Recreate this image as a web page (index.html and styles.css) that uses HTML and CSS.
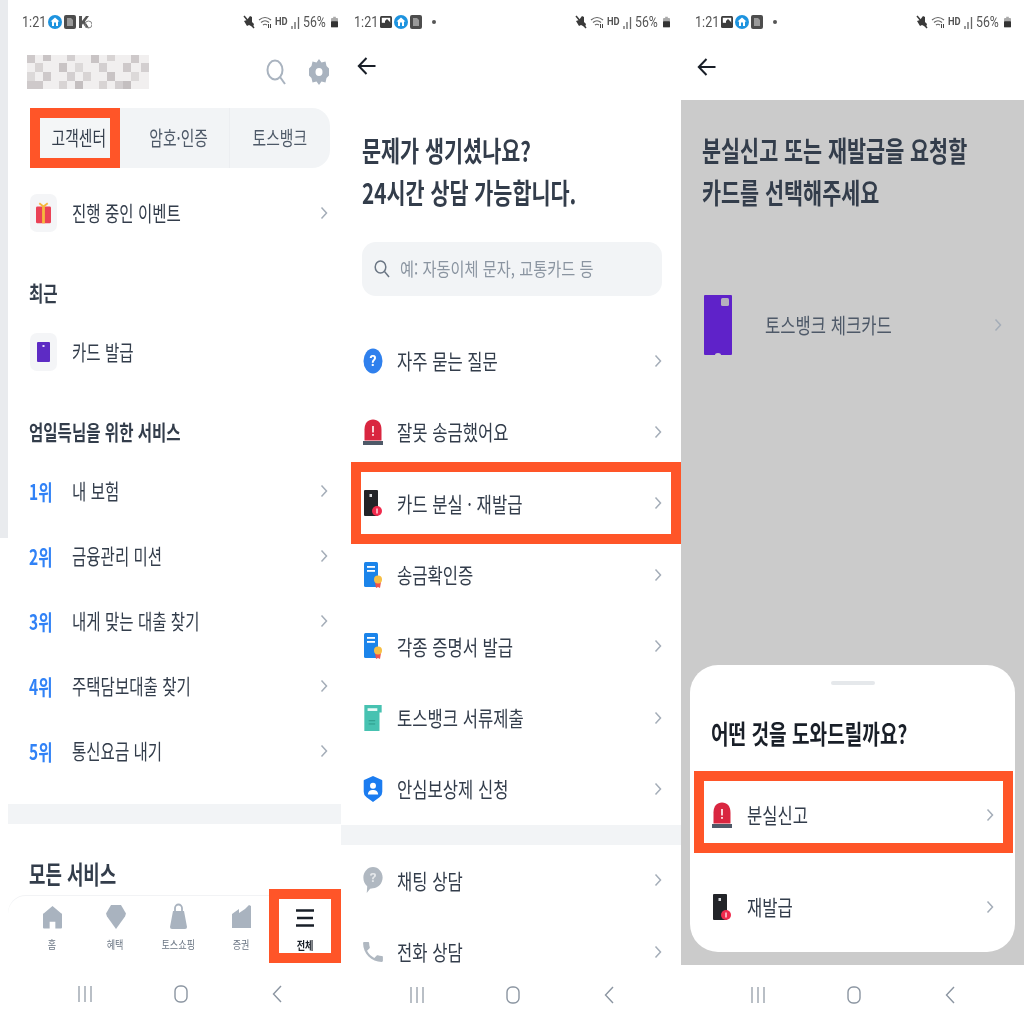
FILE: index.html
```html
<!DOCTYPE html>
<html lang="ko">
<head>
<meta charset="utf-8">
<title>토스 고객센터</title>
<link rel="stylesheet" href="styles.css">
</head>
<body>
<svg class="defs" aria-hidden="true">
  <defs>
    <symbol id="chev" viewBox="0 0 8 14"><path d="M1.500 1.500 6.500 7 1.500 12.500" fill="none" stroke="#a4adb8" stroke-width="1.500"/></symbol>
    <symbol id="back" viewBox="0 0 20 20"><path d="M18.500 10H2M9.500 2 1.800 10l7.700 8" fill="none" stroke="#191f28" stroke-width="2"/></symbol>
    <symbol id="gift" viewBox="0 0 16 22"><rect y="4" width="16" height="18" rx="1.500" fill="#ea4256"/><rect x="6.500" y="4" width="3" height="18" fill="#f6b73c"/><path d="M8 4 3.500 .5M8 4l4.500-3.500" stroke="#f6b73c" stroke-width="2" fill="none"/></symbol>
    <symbol id="card-mini" viewBox="0 0 13 20"><rect width="13" height="20" rx="1" fill="#5d2bc4"/><rect x="5.500" y="3" width="2" height="2" fill="#e4dcf6"/></symbol>
    <symbol id="siren" viewBox="0 0 20 26"><path d="M1.500 21.500V10.500C1.500 4 5 .5 10 .5s8.500 3.500 8.500 10v11z" fill="#d92640"/><rect y="22" width="20" height="4" fill="#4e5968"/><rect x="9.200" y="7" width="1.600" height="6.500" fill="#fff"/><rect x="9.200" y="15" width="1.600" height="1.800" fill="#fff"/></symbol>
    <symbol id="card-lost" viewBox="0 0 18 26"><rect width="14" height="26" rx="1" fill="#222428"/><rect x="5.500" y="4" width="2.500" height="3" fill="#d8dadd"/><circle cx="13" cy="21" r="5" fill="#f02a4c"/><rect x="12.400" y="18.500" width="1.200" height="5" fill="#fff"/></symbol>
    <symbol id="doc" viewBox="0 0 18 26"><rect width="14" height="25" rx="1.500" fill="#1b84ea"/><rect x="3" y="4" width="8" height="1.800" fill="#fff"/><rect x="3" y="8" width="8" height="1.800" fill="#fff"/><path d="M11 20l1 6 2-1 2 1 1-6z" fill="#f0524f"/><circle cx="14" cy="17.500" r="4" fill="#f6bf45"/></symbol>
    <symbol id="doc-teal" viewBox="0 0 16 24"><path d="M0 0h16v7h-2v17H0z" fill="#47c2b1"/><rect x="3" y="3" width="9" height="2.500" fill="#eafaf7"/><rect x="4" y="14" width="6" height="1" fill="#2f9c8d"/><rect x="4" y="17" width="6" height="1" fill="#2f9c8d"/></symbol>
    <symbol id="shield" viewBox="0 0 20 28"><path d="M10 0 19 4a1 1 0 0 1 1 1v12q0 4-3 6l-7 5-7-5q-3-2-3-6V5a1 1 0 0 1 1-1z" fill="#1b7cf0"/><circle cx="10" cy="10.500" r="3.200" fill="#fff"/><path d="M4.500 20c0-3.500 2.500-5 5.500-5s5.500 1.500 5.500 5z" fill="#fff"/></symbol>
    <symbol id="chat" viewBox="0 0 20 27"><path d="M10 0c5.500 0 10 5 10 11s-4.500 11-10 11q-2 0-3 .5L3.500 27 4 20C1.500 18 0 15 0 11 0 5 4.500 0 10 0z" fill="#b0b8c1"/><text x="10" y="16" text-anchor="middle" font-size="14" font-weight="700" fill="#e5e8eb" font-family="Roboto">?</text></symbol>
    <symbol id="phone" viewBox="2 2 20 20"><path d="M6.600 10.800c1.400 2.800 3.800 5.100 6.600 6.600l2.200-2.200c.3-.3.700-.4 1-.2 1.100.4 2.300.6 3.600.6.600 0 1 .4 1 1V20c0 .600-.4 1-1 1C10.600 21 3 13.400 3 4c0-.6.400-1 1-1h3.500c.6 0 1 .4 1 1 0 1.300.2 2.500.6 3.600.1.300 0 .7-.2 1z" fill="#b0b8c1"/></symbol>
    <symbol id="home" viewBox="0 0 20 24"><path d="M10 .500 19 8a1 1 0 0 1 1 1v14a1 1 0 0 1-1 1h-6v-7H7v7H1a1 1 0 0 1-1-1V9a1 1 0 0 1 1-1z" fill="#a9b3bf"/></symbol>
    <symbol id="gem" viewBox="0 0 20 24"><path d="M5 0h10l5 8.500-1 3L10 24 1 11.500l-1-3z" fill="#a9b3bf"/></symbol>
    <symbol id="bag" viewBox="0 0 17 26"><path d="M5 9V5a3.500 3.500 0 0 1 7 0v4" fill="none" stroke="#a9b3bf" stroke-width="1.800"/><path d="M3 8h11l3 16a2 2 0 0 1-2 2H2a2 2 0 0 1-2-2z" fill="#a9b3bf"/></symbol>
    <symbol id="stock" viewBox="0 0 19 23"><path d="M0 9 7 4v4l6-4 4-4 2 1v22H0z" fill="#a9b3bf"/></symbol>
    <symbol id="s-blue" viewBox="0 0 14 14"><circle cx="7" cy="7" r="7" fill="#1d93df"/><path d="M7 2.500 11.500 6.500H10V11H4V6.500H2.500z" fill="#fff"/><rect x="6" y="7.500" width="2" height="3.500" fill="#1d93df"/></symbol>
    <symbol id="s-dark" viewBox="0 0 12 14"><rect width="12" height="14" rx="2" fill="#4d4d4d"/><path d="M3 3h4l2 2v6H3z" fill="#9a9a9a"/></symbol>
    <symbol id="s-pic" viewBox="0 0 12 12"><rect width="12" height="12" rx="1.500" fill="#3c3c3c"/><rect x="1.800" y="1.800" width="8.400" height="5" fill="#fff"/><path d="M5 5l2-2 3 3v1H5z" fill="#3c3c3c"/></symbol>
    <symbol id="s-k" viewBox="0 0 14 14"><path d="M1 1h3v5l4-5h3L7 6.500 11 13H8L5 8.500 4 10v3H1z" fill="#555"/><circle cx="10.500" cy="9.500" r="3.500" fill="none" stroke="#888"/></symbol>
    <symbol id="s-mute" viewBox="0 0 12 14"><path d="M1 6l3-1 3-4 2 1v5l2 2-1 3-4-2-2 1z" fill="#3a3a3a"/><path d="M1 1l10 12" stroke="#3a3a3a" stroke-width="1.500"/></symbol>
    <symbol id="s-wifi" viewBox="0 0 14 14"><path d="M1 5q6-5 12 0M3 7.500q4-3.500 8 0M5 10q2-1.500 4 0" fill="none" stroke="#666" stroke-width="1.200"/><path d="M10.500 9v4M12.500 9v4" stroke="#444"/></symbol>
    <symbol id="s-signal" viewBox="0 0 9 13"><path d="M1 13v-3M4 13V6M7.500 13V1" stroke="#666" stroke-width="1.300"/></symbol>
    <symbol id="s-batt" viewBox="0 0 8 12"><rect x="2.500" width="3" height="2" fill="#aaa"/><rect y="1.500" width="8" height="10.500" rx="1" fill="#aaa"/><rect y="5" width="8" height="7" rx="1" fill="#333"/></symbol>
  </defs>
</svg>

<main class="screen">
  <section class="panel panel-one">
    <div class="status">
      <span class="time">1:21</span>
      <svg class="si si-14"><use href="#s-blue"/></svg>
      <svg class="si si-12"><use href="#s-dark"/></svg>
      <svg class="si si-14"><use href="#s-k"/></svg>
      <div class="status-right">
        <svg class="si si-12"><use href="#s-mute"/></svg>
        <svg class="si si-14"><use href="#s-wifi"/></svg>
        <span class="hd">HD</span>
        <svg class="si si-9"><use href="#s-signal"/></svg>
        <span class="pct">56%</span>
        <svg class="si si-8"><use href="#s-batt"/></svg>
      </div>
    </div>
    <header class="main-head">
      <svg class="mosaic" viewBox="0 0 122 34" role="img" aria-label="가려진 이름">
        <rect width="122" height="34" fill="#f1efef"/>
        <g fill="#bfb9ba">
          <rect y="0" width="8" height="8" opacity=".7"/><rect x="16" width="8" height="6" opacity=".8"/><rect x="40" width="8" height="6" opacity=".6"/><rect x="64" width="8" height="8" opacity=".8"/><rect x="80" width="8" height="6" opacity=".5"/><rect x="104" width="8" height="8" opacity=".7"/>
          <rect x="8" y="8" width="8" height="9" opacity=".5"/><rect x="32" y="8" width="8" height="9" opacity=".8"/><rect x="48" y="8" width="8" height="9" opacity=".4"/><rect x="72" y="8" width="8" height="9" opacity=".6"/><rect x="96" y="8" width="8" height="9" opacity=".7"/><rect x="114" y="8" width="8" height="9" opacity=".6"/>
          <rect y="17" width="8" height="9" opacity=".4"/><rect x="16" y="17" width="8" height="9" opacity=".7"/><rect x="40" y="17" width="8" height="9" opacity=".6"/><rect x="56" y="17" width="8" height="9" opacity=".5"/><rect x="80" y="17" width="8" height="9" opacity=".8"/><rect x="104" y="17" width="8" height="9" opacity=".4"/>
          <rect y="26" width="16" height="8" opacity=".7"/><rect x="32" y="26" width="8" height="8" opacity=".5"/><rect x="48" y="26" width="8" height="8" opacity=".9"/><rect x="72" y="26" width="8" height="8" opacity=".5"/><rect x="88" y="26" width="8" height="8" opacity=".6"/><rect x="96" y="26" width="8" height="8" opacity=".9"/>
        </g>
      </svg>
      <svg class="head-search" viewBox="0 0 20 26"><ellipse cx="9" cy="11" rx="7.500" ry="9.500" fill="none" stroke="#a9b3bf" stroke-width="2"/><path d="M14 18l5 7" stroke="#a9b3bf" stroke-width="2"/></svg>
      <svg class="head-gear" viewBox="0 0 20 26"><path d="M10 0l2.500 3.500 4-1 1 4.500 2.500 2.500v7L17.500 19l-1 4.500-4-1L10 26l-2.500-3.500-4 1-1-4.500L0 16.500v-7L2.500 7l1-4.500 4 1z" fill="#a9b3bf"/><ellipse cx="10" cy="13" rx="3.500" ry="4" fill="#fff"/></svg>
    </header>
    <nav class="tabs">
      <div class="tab tab-on"><span class="tx tx-c">고객센터</span></div>
      <div class="tab tab-mid"><span class="tx tx-c">암호·인증</span></div>
      <div class="tab tab-line"><span class="tx tx-c">토스뱅크</span></div>
    </nav>
    <div class="row row-tile row-event">
      <span class="tile"><svg class="tile-gift"><use href="#gift"/></svg></span>
      <span class="tx">진행 중인 이벤트</span>
      <svg class="chev"><use href="#chev"/></svg>
    </div>
    <h2 class="sub sub-recent"><span class="tx">최근</span></h2>
    <div class="row row-tile row-recent">
      <span class="tile"><svg class="tile-card"><use href="#card-mini"/></svg></span>
      <span class="tx">카드 발급</span>
    </div>
    <h2 class="sub sub-for"><span class="tx">엄일득님을 위한 서비스</span></h2>
    <ol class="ranks">
      <li class="row row-rank"><b class="rank"><span class="tx">1위</span></b><span class="tx">내 보험</span><svg class="chev"><use href="#chev"/></svg></li>
      <li class="row row-rank"><b class="rank"><span class="tx">2위</span></b><span class="tx">금융관리 미션</span><svg class="chev"><use href="#chev"/></svg></li>
      <li class="row row-rank"><b class="rank"><span class="tx">3위</span></b><span class="tx">내게 맞는 대출 찾기</span><svg class="chev"><use href="#chev"/></svg></li>
      <li class="row row-rank"><b class="rank"><span class="tx">4위</span></b><span class="tx">주택담보대출 찾기</span><svg class="chev"><use href="#chev"/></svg></li>
      <li class="row row-rank"><b class="rank"><span class="tx">5위</span></b><span class="tx">통신요금 내기</span><svg class="chev"><use href="#chev"/></svg></li>
    </ol>
    <div class="gap-band band-one"></div>
    <h2 class="sub sub-all"><span class="tx">모든 서비스</span></h2>
    <nav class="tabbar">
      <div class="tb"><svg class="tb-icon tb-home"><use href="#home"/></svg><span class="tx tx-c">홈</span></div>
      <div class="tb"><svg class="tb-icon tb-gem"><use href="#gem"/></svg><span class="tx tx-c">혜택</span></div>
      <div class="tb"><svg class="tb-icon tb-bag"><use href="#bag"/></svg><span class="tx tx-c">토스쇼핑</span></div>
      <div class="tb"><svg class="tb-icon tb-stock"><use href="#stock"/></svg><span class="tx tx-c">증권</span></div>
      <div class="tb tb-on">
        <svg class="tb-menu" viewBox="0 0 18 18"><path d="M0 1.500h18M1 9h16M0 16.500h18" stroke="#191f28" stroke-width="2.400"/></svg>
        <span class="tx tx-c">전체</span>
      </div>
    </nav>
    <div class="sysnav sysnav-one">
      <svg class="sys-lines" viewBox="0 0 14 16"><path d="M1 0v16M7 0v16M13 0v16" stroke="#8b95a1" stroke-width="1.200"/></svg>
      <svg class="sys-home" viewBox="0 0 14 18"><rect x="1" y="1" width="12" height="16" rx="5" fill="none" stroke="#8b95a1" stroke-width="1.400"/></svg>
      <svg class="sys-back" viewBox="0 0 10 18"><path d="M9 1 1.500 9 9 17" fill="none" stroke="#8b95a1" stroke-width="1.400"/></svg>
    </div>
  </section>

  <section class="panel panel-two">
    <div class="status">
      <span class="time">1:21</span>
      <svg class="si si-12"><use href="#s-pic"/></svg>
      <svg class="si si-14"><use href="#s-blue"/></svg>
      <svg class="si si-12"><use href="#s-dark"/></svg>
      <i class="dot"></i>
      <div class="status-right">
        <svg class="si si-12"><use href="#s-mute"/></svg>
        <svg class="si si-14"><use href="#s-wifi"/></svg>
        <span class="hd">HD</span>
        <svg class="si si-9"><use href="#s-signal"/></svg>
        <span class="pct">56%</span>
        <svg class="si si-8"><use href="#s-batt"/></svg>
      </div>
    </div>
    <header class="back-head"><svg class="back"><use href="#back"/></svg></header>
    <div class="scroll">
      <h1 class="title"><span class="tx">문제가 생기셨나요?</span><br><span class="tx">24시간 상담 가능합니다.</span></h1>
      <div class="search">
        <svg class="search-ico" viewBox="0 0 16 18"><ellipse cx="6.500" cy="7" rx="5.300" ry="6" fill="none" stroke="#6b7684" stroke-width="1.500"/><path d="M10.500 11.500 15 17" stroke="#6b7684" stroke-width="1.500"/></svg>
        <span class="tx">예: 자동이체 문자, 교통카드 등</span>
      </div>
      <ul class="menu">
        <li class="row row-menu"><svg class="mi" viewBox="0 0 20 26"><ellipse cx="10" cy="13" rx="9.500" ry="12.500" fill="#2f80ed"/><text x="10" y="18" text-anchor="middle" font-size="14" font-weight="700" fill="#fff" font-family="Roboto">?</text></svg><span class="tx">자주 묻는 질문</span><svg class="chev"><use href="#chev"/></svg></li>
        <li class="row row-menu"><svg class="mi"><use href="#siren"/></svg><span class="tx">잘못 송금했어요</span><svg class="chev"><use href="#chev"/></svg></li>
        <li class="row row-menu row-hl"><svg class="mi"><use href="#card-lost"/></svg><span class="tx">카드 분실 · 재발급</span><svg class="chev"><use href="#chev"/></svg></li>
        <li class="row row-menu"><svg class="mi"><use href="#doc"/></svg><span class="tx">송금확인증</span><svg class="chev"><use href="#chev"/></svg></li>
        <li class="row row-menu"><svg class="mi"><use href="#doc"/></svg><span class="tx">각종 증명서 발급</span><svg class="chev"><use href="#chev"/></svg></li>
        <li class="row row-menu"><svg class="mi"><use href="#doc-teal"/></svg><span class="tx">토스뱅크 서류제출</span><svg class="chev"><use href="#chev"/></svg></li>
        <li class="row row-menu"><svg class="mi"><use href="#shield"/></svg><span class="tx">안심보상제 신청</span><svg class="chev"><use href="#chev"/></svg></li>
      </ul>
      <div class="gap-band"></div>
      <ul class="menu">
        <li class="row row-menu"><svg class="mi"><use href="#chat"/></svg><span class="tx">채팅 상담</span><svg class="chev"><use href="#chev"/></svg></li>
        <li class="row row-menu"><svg class="mi"><use href="#phone"/></svg><span class="tx">전화 상담</span><svg class="chev"><use href="#chev"/></svg></li>
      </ul>
    </div>
    <div class="sysnav">
      <svg class="sys-lines" viewBox="0 0 14 16"><path d="M1 0v16M7 0v16M13 0v16" stroke="#8b95a1" stroke-width="1.200"/></svg>
      <svg class="sys-home" viewBox="0 0 14 18"><rect x="1" y="1" width="12" height="16" rx="5" fill="none" stroke="#8b95a1" stroke-width="1.400"/></svg>
      <svg class="sys-back" viewBox="0 0 10 18"><path d="M9 1 1.500 9 9 17" fill="none" stroke="#8b95a1" stroke-width="1.400"/></svg>
    </div>
  </section>

  <section class="panel panel-three">
    <div class="status">
      <span class="time">1:21</span>
      <svg class="si si-12"><use href="#s-pic"/></svg>
      <svg class="si si-14"><use href="#s-blue"/></svg>
      <svg class="si si-12"><use href="#s-dark"/></svg>
      <i class="dot"></i>
      <div class="status-right">
        <svg class="si si-12"><use href="#s-mute"/></svg>
        <svg class="si si-14"><use href="#s-wifi"/></svg>
        <span class="hd">HD</span>
        <svg class="si si-9"><use href="#s-signal"/></svg>
        <span class="pct">56%</span>
        <svg class="si si-8"><use href="#s-batt"/></svg>
      </div>
    </div>
    <header class="back-head back-head-tall"><svg class="back"><use href="#back"/></svg></header>
    <div class="dim">
      <h1 class="title title-dim"><span class="tx">분실신고 또는 재발급을 요청할</span><br><span class="tx">카드를 선택해주세요</span></h1>
      <div class="row card-row">
        <svg class="bigcard" viewBox="0 0 28 60"><path d="M1 0h26a1 1 0 0 1 1 1v58a1 1 0 0 1-1 1H17a3 2 0 0 0-6 0H1a1 1 0 0 1-1-1V1a1 1 0 0 1 1-1z" fill="#5f22c9"/><rect x="17" y="3" width="8" height="8" rx="1.500" fill="#b5b0bd"/></svg>
        <span class="tx">토스뱅크 체크카드</span>
        <svg class="chev"><use href="#chev"/></svg>
      </div>
      <aside class="sheet">
        <div class="handle"></div>
        <h2 class="sheet-title"><span class="tx">어떤 것을 도와드릴까요?</span></h2>
        <div class="row sheet-row sheet-row-hl"><svg class="mi"><use href="#siren"/></svg><span class="tx">분실신고</span><svg class="chev"><use href="#chev"/></svg></div>
        <div class="row sheet-row sheet-row-next"><svg class="mi"><use href="#card-lost"/></svg><span class="tx">재발급</span><svg class="chev"><use href="#chev"/></svg></div>
      </aside>
    </div>
    <div class="sysnav">
      <svg class="sys-lines" viewBox="0 0 14 16"><path d="M1 0v16M7 0v16M13 0v16" stroke="#8b95a1" stroke-width="1.200"/></svg>
      <svg class="sys-home" viewBox="0 0 14 18"><rect x="1" y="1" width="12" height="16" rx="5" fill="none" stroke="#8b95a1" stroke-width="1.400"/></svg>
      <svg class="sys-back" viewBox="0 0 10 18"><path d="M9 1 1.500 9 9 17" fill="none" stroke="#8b95a1" stroke-width="1.400"/></svg>
    </div>
  </section>
</main>
</body>
</html>
```

FILE: styles.css
```css
* { box-sizing: border-box; }
html, body { margin: 0; padding: 0; background: #fff; }
body { width: 1024px; height: 1024px; overflow: hidden; font-family: "Noto Sans CJK KR", "Noto Sans", sans-serif; color: #333d4b; }
h1, h2, ol, ul { margin: 0; padding: 0; list-style: none; font-weight: inherit; font-size: inherit; }
svg { display: block; flex: none; }
.defs { position: absolute; width: 0; height: 0; }

.screen { display: grid; grid-template-columns: 341px 340px 343px; height: 1024px; filter: blur(.45px); }
.panel { position: relative; display: flex; flex-direction: column; height: 1024px; overflow: hidden; background: #fff; }
.panel-one { padding-left: 8px; }
.panel-one::before { content: ""; position: absolute; left: 0; top: 0; width: 8px; height: 538px; background: #e9ebee; }

/* squeezed text: the source picture is narrowed horizontally */
.tx { display: inline-block; white-space: nowrap; transform: scaleX(var(--squeeze, .79)); transform-origin: left center; line-height: 1.2; }
.tx-c { transform-origin: center center; }

/* status bar */
.status { height: 44px; display: flex; align-items: center; gap: 2px; padding: 0 3px 0 14px; color: #555; flex: none; }
.panel-two .status { padding: 0 11px 0 13px; }
.panel-three .status { padding: 0 13px 0 14px; }
.time { font: 14px Roboto, sans-serif; margin-right: 2px; color: #555; transform: scaleX(.9); transform-origin: left; width: 22px; }
.status-right { margin-left: auto; display: flex; align-items: center; gap: 3px; }
.si { height: 14px; }
.si-14 { width: 14px; }
.si-12 { width: 12px; }
.si-9 { width: 9px; height: 13px; }
.si-8 { width: 7px; height: 12px; }
.hd { font: 700 11px/10px Roboto, sans-serif; color: #555; width: 13px; transform: scaleX(.85); transform-origin: left; }
.pct { font: 15px Roboto, sans-serif; color: #555; width: 25px; transform: scaleX(.82); transform-origin: left; white-space: nowrap; }
.dot { width: 4px; height: 4px; border-radius: 50%; background: #555; margin-left: 8px; }

/* panel 1 header + tabs */
.main-head { height: 56px; display: flex; align-items: center; padding: 0 12px 0 19px; flex: none; }
.mosaic { width: 122px; height: 34px; }
.head-search { width: 20px; height: 26px; margin-left: auto; }
.head-gear { width: 20px; height: 26px; margin-left: 23px; }

.tabs { margin: 8px 0 0 22px; width: 300px; height: 60px; background: #f2f4f6; border-radius: 0 18px 18px 0; display: grid; grid-template-columns: 90px 109px 101px; flex: none; font-size: 20px; color: #4e5968; --squeeze: .74; }
.tab { display: flex; align-items: center; justify-content: center; }
.tab-on { border: 10px solid #ff5528; background: #f4f6f7; color: #333d4b; padding-left: 7px; }
.tab-mid { padding-left: 8px; }
.tab-line { box-shadow: inset 1px 0 0 #eceef1; }

/* rows */
.row { display: flex; align-items: center; font-size: 21px; --squeeze: .74; }
.chev { width: 8px; height: 14px; margin-left: auto; }
.row-tile { height: 50px; padding: 0 13px 0 22px; gap: 15px; flex: none; }
.row-event { margin-top: 20px; }
.row-recent { margin-top: 19px; }
.tile { width: 27px; height: 38px; border-radius: 7px; background: #f4f5f7; display: flex; align-items: center; justify-content: center; }
.tile-gift { width: 15px; height: 22px; }
.tile-card { width: 13px; height: 20px; }

.sub { height: 30px; padding-left: 21px; display: flex; align-items: center; font-size: 21px; font-weight: 700; flex: none; --squeeze: .74; }
.sub-recent { margin-top: 40px; }
.sub-for { margin-top: 40px; }
.sub-all { margin-top: 34px; font-size: 25px; --squeeze: .715; }

.ranks { margin-top: 11px; flex: none; }
.row-rank { height: 65px; padding: 0 13px 0 21px; }
.rank { width: 43px; color: #3182f6; font-weight: 700; }

.gap-band { height: 20px; background: #f2f4f6; flex: none; }
.band-one { margin-top: 21px; }

/* bottom tabs */
.tabbar { margin-top: 7px; height: 68px; display: flex; padding-left: 13px; border-radius: 18px 18px 0 0; box-shadow: inset 0 1px 0 #f2f3f5; flex: none; --squeeze: .83; }
.tb { width: 63px; padding-top: 10px; display: flex; flex-direction: column; align-items: center; justify-content: flex-start; font-size: 11px; color: #6b7684; }
.tb .tx { margin-top: auto; margin-bottom: 12px; }
.tb-icon { height: 24px; }
.tb-home { width: 19px; }
.tb-gem { width: 20px; }
.tb-bag { width: 17px; height: 26px; margin-top: -2px; }
.tb-stock { width: 19px; height: 23px; }
.tb-on { width: 72px; height: 74px; margin: -6px 0 0 -4px; padding-top: 10px; border: 10px solid #ff5528; color: #191f28; font-weight: 700; background: #fff; }
.tb-on .tx { margin-bottom: 1px; }
.tb-menu { width: 18px; height: 18px; }

/* system navigation */
.sysnav { height: 59px; display: flex; align-items: center; flex: none; padding-left: 69px; position: relative; }
.sysnav-one { height: 61px; padding-left: 70px; }
.panel-three .sysnav { padding-left: 70px; }
.sys-lines { width: 14px; height: 16px; }
.sys-home { width: 14px; height: 18px; margin-left: 82px; }
.sys-back { width: 10px; height: 18px; margin-left: 84px; }

/* panel 2 */
.back-head { height: 44px; display: flex; align-items: center; padding-left: 16px; flex: none; }
.back-head-tall { height: 56px; align-items: flex-start; padding-top: 13px; padding-left: 16px; }
.back { width: 20px; height: 20px; }
.scroll { flex: 1; min-height: 0; overflow: hidden; --squeeze: .79; }
.title { margin: 41px 0 0 21px; font-size: 28px; font-weight: 700; line-height: 42px; color: #333d4b; --squeeze: .74; }
.search { margin: 29px 0 0 21px; width: 300px; height: 54px; border-radius: 14px; background: #f2f4f6; display: flex; align-items: center; gap: 10px; padding-left: 12px; font-size: 18px; color: #8b95a1; --squeeze: .845; }
.search-ico { width: 16px; height: 18px; }
.scroll .search + .menu { margin-top: 29px; }
.row-menu { height: 71.4px; padding: 0 19px 0 21px; gap: 13px; --squeeze: .79; }
.mi { width: 22px; height: 26px; }
.row-hl { height: 82px; margin: -5.3px 0 -5.3px 10px; padding: 0 9px 0 1px; border: 10px solid #ff5528; background: #fff; position: relative; }

/* panel 3 */
.dim { flex: 1; min-height: 0; position: relative; background: #cbcbcb; }
.title-dim { margin: 29px 0 0 21px; }
.card-row { margin-top: 82px; height: 60px; padding: 0 22px 0 23px; gap: 33px; color: #4e5968; --squeeze: .79; }
.bigcard { width: 28px; height: 60px; }
.sheet { position: absolute; left: 9px; right: 9px; bottom: 13px; height: 287px; border-radius: 28px; background: #fff; padding-top: 16px; }
.handle { width: 44px; height: 4px; border-radius: 2px; background: #e5e8eb; margin: 0 auto; }
.sheet-title { margin: 27px 0 0 21px; height: 42px; display: flex; align-items: center; font-size: 26px; font-weight: 700; color: #191f28; --squeeze: .735; }
.sheet-row { height: 82px; margin: 17px 2px 0 4px; padding: 0 9px 0 7px; gap: 14px; border: 10px solid transparent; --squeeze: .79; }
.sheet-row-hl { border-color: #ff5528; padding-top: 5px; }
.sheet-row-next { margin-top: 13px; }
```
